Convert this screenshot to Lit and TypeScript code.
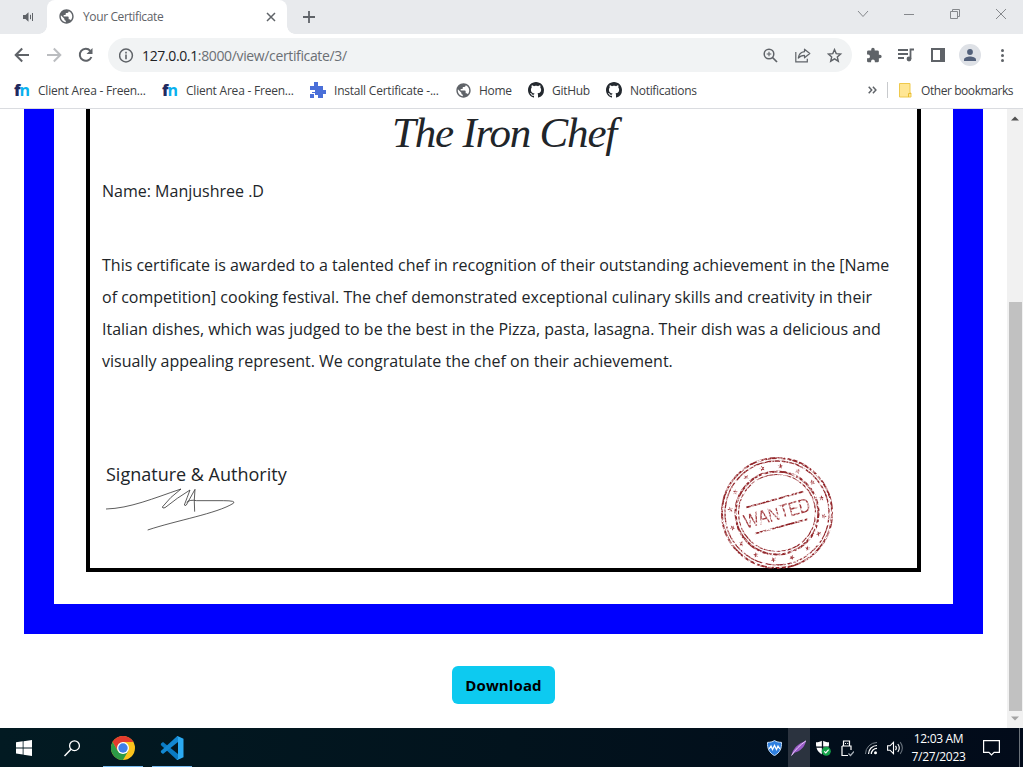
import { LitElement, html, css, svg } from "lit";
import { customElement } from "lit/decorators.js";

const icon = (w: number, h: number, body: unknown, vb = `0 0 ${w} ${h}`) =>
  html`<svg class="ic" width=${w} height=${h} viewBox=${vb}>${body}</svg>`;

const globe = icon(15, 15, svg`<path fill="#5f6368" d="M12 2C6.480 2 2 6.480 2 12s4.480 10 10 10 10-4.480 10-10S17.520 2 12 2zm-1 17.930c-3.950-.49-7-3.850-7-7.930 0-.62.080-1.210.210-1.790L9 15v1c0 1.100.9 2 2 2v1.930zm6.900-2.540c-.26-.81-1-1.390-1.900-1.390h-1v-3c0-.55-.45-1-1-1H8v-2h2c.55 0 1-.45 1-1V7h2c1.100 0 2-.9 2-2v-.41c2.930 1.190 5 4.060 5 7.410 0 2.080-.8 3.970-2.100 5.390z"/>`, "1.500 1.500 21 21");

const octocat = icon(16, 16, svg`<path fill="#24292f" d="M8 0C3.58 0 0 3.58 0 8c0 3.54 2.29 6.53 5.47 7.59.4.07.55-.17.55-.38 0-.19-.01-.82-.01-1.49-2.01.37-2.53-.49-2.69-.94-.09-.23-.48-.94-.82-1.13-.28-.15-.68-.52-.01-.53.63-.01 1.08.58 1.23.82.72 1.21 1.87.87 2.33.66.07-.52.28-.87.51-1.07-1.78-.2-3.64-.89-3.64-3.95 0-.87.31-1.59.82-2.15-.08-.2-.36-1.02.08-2.12 0 0 .67-.21 2.2.82.64-.18 1.32-.27 2-.27s1.36.09 2 .27c1.53-1.04 2.2-.82 2.2-.82.44 1.1.16 1.92.08 2.12.51.56.82 1.27.82 2.15 0 3.07-1.87 3.75-3.65 3.95.29.25.54.73.54 1.48 0 1.07-.01 1.93-.01 2.2 0 .21.15.46.55.38A8.01 8.01 0 0 0 16 8c0-4.42-3.58-8-8-8z"/>`);

const pixelPuzzle = icon(16, 16, svg`<path fill="#4a6fd8" shape-rendering="crispEdges" d="M4 0h4v4h5v4h3v4h-3v4h-5v-3h-3v-2h-3v-1h3v-2h-5v-4h4zM0 12h4v4h-4z"/>`);

const folder = icon(13, 15, svg`<path d="M.5.5h10.500v9.500h1v4h-11.500z" fill="#ffe694" stroke="#efc94c"/><path d="M9.500 14v-3.500h2.500" fill="none" stroke="#e8bd30"/>`);

const fnLogo = html`<span class="fn"><b>f</b><i>n</i></span>`;

const G = "#5f6368";

@customElement("browser-tabs")
class BrowserTabs extends LitElement {
  static styles = css`
    :host { display: flex; height: 34px; background: #e8eaed; font: 12px "Open Sans", sans-serif; }
    .ic { display: block; flex: none; }
    .muted { width: 47px; display: flex; align-items: center; padding-left: 23px; box-sizing: border-box; }
    .tab { width: 240px; height: 34px; box-sizing: border-box; background: #fff; border-radius: 8px 8px 0 0; display: flex; align-items: center; padding: 0 11px 1px 12px; }
    .flare { width: 8px; margin-left: -8px; align-self: flex-end; height: 8px; background: radial-gradient(circle at 0 0, #e8eaed 7.5px, #fff 8px); }
    .flare.r { margin: 0 -8px 0 0; background: radial-gradient(circle at 100% 0, #e8eaed 7.5px, #fff 8px); }
    .t { margin-left: 9px; flex: 1; color: #5f6368; letter-spacing: -0.38px; white-space: nowrap; }
    .plus { width: 44px; display: flex; align-items: center; justify-content: center; }
    .win { margin: 0 -1px 0 auto; display: grid; grid-template-columns: repeat(4, 46px); height: 28px; align-items: center; justify-items: center; }
  `;
  render() {
    return html`
      <div class="muted">${icon(11, 12, svg`<path d="M0 4h2.500l3-2.800v9.600l-3-2.800h-2.500z" fill=${G}/><path d="M7.500 3.800v4.400M9.500 2v8" stroke=${G} stroke-width="1"/>`)}</div>
      <div class="flare"></div>
      <div class="tab">${globe}<span class="t">Your Certificate</span>
        ${icon(10, 10, svg`<path d="M1 1l8 8M9 1l-8 8" stroke=${G} stroke-width="1.500"/>`)}</div>
      <div class="flare r"></div>
      <div class="plus">${icon(12, 12, svg`<path d="M6 0v12M0 6h12" stroke=${G} stroke-width="1.800"/>`)}</div>
      <div class="win">
        ${icon(12, 8, svg`<path d="M1 1l5 5.500 5-5.500" fill="none" stroke="#85888c"/>`)}
        ${icon(10, 10, svg`<path d="M0 5.500h10" stroke="#85888c"/>`)}
        ${icon(10, 10, svg`<path d="M.5 2.500h7v7h-7zM2.500 2.500v-2h7v7h-2" fill="none" stroke="#85888c"/>`)}
        ${icon(10, 10, svg`<path d="M0 0l10 10M10 0l-10 10" stroke="#85888c"/>`)}
      </div>`;
  }
}

@customElement("browser-toolbar")
class BrowserToolbar extends LitElement {
  static styles = css`
    :host { display: flex; height: 42px; background: #fff; align-items: center; font: 14px "Open Sans", sans-serif; }
    .ic { display: block; flex: none; }
    .nav, .inner, .ext { display: grid; grid-auto-flow: column; grid-auto-columns: 32px; justify-items: center; align-items: center; }
    .nav { padding: 0 6px; }
    .omni { width: 744px; height: 34px; border-radius: 17px; background: #f1f3f4; display: flex; align-items: center; box-sizing: border-box; padding: 0 1px 0 11px; }
    .url { flex: 1; margin-left: 8px; color: #6b6f74; white-space: nowrap; letter-spacing: -0.36px; }
    .url b { font-weight: 400; color: #202124; }
    .ext { margin-left: 6px; }
    .av { width: 22px; height: 22px; border-radius: 50%; background: #dee1e6; display: grid; place-items: center; }
  `;
  render() {
    return html`
      <div class="nav">
        ${icon(16, 16, svg`<path d="M15 8h-13M8.200 1.500l-6.500 6.500 6.500 6.500" fill="none" stroke=${G} stroke-width="2"/>`)}
        ${icon(16, 16, svg`<path d="M1 8h13M7.800 1.500l6.500 6.500-6.500 6.500" fill="none" stroke="#bbbdc0" stroke-width="2"/>`)}
        ${icon(16, 16, svg`<path d="M13.400 10A6 6 0 1 1 12.300 3.800" fill="none" stroke=${G} stroke-width="2"/><path d="M14.500 1v6h-6z" fill=${G}/>`)}
      </div>
      <div class="omni">
        ${icon(15, 15, svg`<circle cx="7" cy="7.500" r="6.400" fill="none" stroke=${G} stroke-width="1.500"/><path d="M7 6.500v4.700M7 3.800v1.600" stroke=${G} stroke-width="1.600"/>`)}
        <span class="url"><b>127.0.0.1</b>:8000/view/certificate/3/</span>
        <div class="inner">
          ${icon(16, 15, svg`<circle cx="6" cy="6" r="4.800" fill="none" stroke=${G} stroke-width="1.500"/><path d="M9.500 9.500l4.500 4.500" stroke=${G} stroke-width="1.700"/><path d="M6 3.700v4.600M3.700 6h4.600" stroke=${G} stroke-width="1.100"/>`)}
          ${icon(16, 15, svg`<path d="M.8 4v9.800h11.500v-3" fill="none" stroke=${G} stroke-width="1.200"/><path d="M9.500 1.200l5.300 4.300-5.300 4.300v-2.500c-3 0-4.700.8-6.200 2.800.5-3.500 2.500-6 6.200-6.400z" fill="none" stroke=${G} stroke-width="1.200" stroke-linejoin="round"/>`)}
          ${icon(16, 15, svg`<path d="M7.500 1.600l1.700 4 4.400.4-3.300 2.900 1 4.300-3.800-2.300-3.800 2.300 1-4.300-3.300-2.900 4.400-.4z" fill="none" stroke=${G} stroke-width="1.400"/>`)}
        </div>
      </div>
      <div class="ext">
        ${icon(16, 16, svg`<path fill=${G} d="M20.500 11H19V7a2 2 0 0 0-2-2h-4V3.500a2.500 2.500 0 0 0-5 0V5H4a2 2 0 0 0-2 2v3.800h1.500a2.700 2.700 0 0 1 0 5.400H2V20a2 2 0 0 0 2 2h3.800v-1.500a2.700 2.700 0 0 1 5.400 0V22H17a2 2 0 0 0 2-2v-4h1.500a2.500 2.500 0 0 0 0-5z"/>`, "0.500 0 23 23")}
        ${icon(16, 14, svg`<path d="M0 2h10M0 6h10M0 10h6" stroke=${G} stroke-width="1.800"/><path d="M12.500 11v-9.500h3.500" fill="none" stroke=${G} stroke-width="1.800"/><circle cx="11" cy="11" r="2.400" fill=${G}/>`)}
        ${icon(14, 14, svg`<path d="M1 1h12v12h-12z" fill="none" stroke=${G} stroke-width="2"/><path d="M9 1h4v12h-4z" fill=${G}/>`)}
        <span class="av">${icon(12, 12, svg`<circle cx="6" cy="3" r="2.900" fill="#52607a"/><path d="M0 12v-1.600c0-2 3.500-3 6-3s6 1 6 3v1.600z" fill="#52607a"/>`)}</span>
        ${icon(4, 14, svg`<g fill=${G}><circle cx="2.500" cy="2.500" r="1.500"/><circle cx="2.500" cy="7.500" r="1.500"/><circle cx="2.500" cy="12.500" r="1.500"/></g>`)}
      </div>`;
  }
}

@customElement("bookmark-bar")
class BookmarkBar extends LitElement {
  static styles = css`
    :host { display: flex; height: 33px; padding: 0 0 4px 14px; box-sizing: border-box; width: 1023px; background: #fff; border-bottom: 1px solid #dadce0; align-items: center; font: 12px "Open Sans", sans-serif; color: #3c4043; }
    .ic { display: block; flex: none; }
    .bm { display: flex; align-items: center; gap: 8px; white-space: nowrap; flex: none; }
    .w0 { width: 148px; letter-spacing: -0.22px; } .w1 { width: 146px; letter-spacing: -0.22px; }
    .w2 { width: 72px; letter-spacing: -0.3px; } .w3 { width: 78px; letter-spacing: -0.3px; } .w4 { width: 120px; letter-spacing: -0.3px; }
    .fn { width: 16px; height: 16px; font: bold 16px/16px "Open Sans", sans-serif; letter-spacing: -1.1px; display: block; }
    .fn b { color: #20295f; } .fn i { color: #0ab0ee; font-style: normal; }
    .more { margin-left: auto; width: 19px; }
    .sep { width: 1px; height: 16px; background: #c8cacd; margin-right: 11px; }
    .other { gap: 9px; width: 124px; letter-spacing: -0.43px; }
  `;
  render() {
    const items = [
      [fnLogo, "Client Area - Freen...", "w0"],
      [fnLogo, "Client Area - Freen...", "w0"],
      [pixelPuzzle, "Install Certificate -...", "w1"],
      [globe, "Home", "w2"],
      [octocat, "GitHub", "w3"],
      [octocat, "Notifications", "w4"],
    ];
    return html`${items.map(([i, t, w]) => html`<div class="bm ${w}">${i}<span>${t}</span></div>`)}
      <div class="more">${icon(9, 8, svg`<path d="M.7.7l3 3.300-3 3.300M4.900.7l3 3.300-3 3.300" fill="none" stroke=${G} stroke-width="1.500"/>`)}</div>
      <div class="sep"></div>
      <div class="bm other">${folder}<span>Other bookmarks</span></div>`;
  }
}

@customElement("wanted-stamp")
class WantedStamp extends LitElement {
  static styles = css`
    :host { display: block; width: 114px; height: 112px; }
    svg { display: block; overflow: visible; }
    .w { font: 20px "Liberation Sans Narrow", "Liberation Sans", sans-serif; }
  `;
  render() {
    const stars = Array.from({ length: 16 }, (_, i) => {
      const a = (i * 22.5 + 4) * Math.PI / 180;
      return svg`<path transform="translate(${57 + 47 * Math.cos(a)} ${56 + 47 * Math.sin(a)}) rotate(${i * 22.5 + 94})" d="M0-2.800l.8 1.900 2 .1-1.600 1.300.6 2-1.800-1.100-1.800 1.100.6-2-1.600-1.300 2-.1z"/>`;
    });
    return html`<svg width="114" height="112" viewBox="0 0 114 112">
      <filter id="worn" x="-5%" y="-5%" width="110%" height="110%" color-interpolation-filters="sRGB">
        <feTurbulence type="fractalNoise" baseFrequency="0.35" numOctaves="2" seed="7" result="n"/>
        <feColorMatrix in="n" type="matrix" values="0 0 0 0 0  0 0 0 0 0  0 0 0 0 0  0 0 0 3.200 -0.900" result="m"/>
        <feComposite in="SourceGraphic" in2="m" operator="in"/>
      </filter>
      <g filter="url(#worn)" fill="#a13a3e" stroke="none">
        <g fill="none" stroke="#94282c">
          <circle cx="57" cy="56" r="55" stroke-width="2"/>
          <circle cx="57" cy="56" r="52" stroke-width="1.300"/>
          <circle cx="57" cy="56" r="41.500" stroke-width="2.200"/>
          <circle cx="57" cy="56" r="38.500" stroke-width="1.200"/>
        </g>
        ${stars}
        <g transform="rotate(-15.500 57 56)">
          <path d="M29 42.500h59M30 70h55" stroke="#8f2226" stroke-width="1.800"/>
          <text class="w" x="23" y="63" textLength="68" lengthAdjust="spacingAndGlyphs">WANTED</text>
        </g>
      </g></svg>`;
  }
}

@customElement("certificate-page")
class CertificatePage extends LitElement {
  static styles = css`
    :host { display: flex; height: 619px; background: #fff; overflow: hidden; font: 16px/32px "Open Sans", sans-serif; color: #212529; }
    .page { width: 1007px; padding: 0 24px; box-sizing: border-box; }
    .frame { height: 525px; box-sizing: border-box; border: 30px solid #00f; border-top: 0; padding: 0 32px 32px; }
    .cert { height: 463px; box-sizing: border-box; border: 4px solid #000; border-top: 0; padding: 0 12px; }
    h1 { margin: 0; height: 66px; width: 804px; text-align: center; font: italic 400 43px/48px "Liberation Serif", serif; letter-spacing: -1.2px; white-space: nowrap; }
    p { margin: 0; white-space: nowrap; }
    .body { margin-top: 42px; }
    .foot { display: flex; justify-content: space-between; margin-top: 71px; padding: 0 71px 0 4px; }
    .sig { font-size: 18px; line-height: 26px; padding-top: 13px; }
    .sig svg { display: block; }
    wanted-stamp { margin-top: 9px; }
    .dl { display: block; margin: 32px 0 0 428px; width: 103px; height: 38px; border: 0; padding: 0; border-radius: 6px; background: #0dcaf0; color: #000; font: bold 15px/38px "Open Sans", sans-serif; letter-spacing: 0.1px; }
    .bar { width: 16px; background: #f1f1f1; display: flex; flex-direction: column; align-items: center; justify-content: space-between; }
    .bar svg { display: block; flex: none; margin: 7px 0 6px; }
    .bar .down { margin: 5px 0 7px; }
    .thumb { width: 13px; height: 409px; background: #c1c1c1; margin: auto 0 0 1px; }
  `;
  render() {
    return html`
      <div class="page">
        <div class="frame"><div class="cert">
          <h1>The Iron Chef</h1>
          <p>Name: Manjushree .D</p>
          <p class="body">This certificate is awarded to a talented chef in recognition of their outstanding achievement in the [Name<br>of competition] cooking festival. The chef demonstrated exceptional culinary skills and creativity in their<br>Italian dishes, which was judged to be the best in the Pizza, pasta, lasagna. Their dish was a delicious and<br>visually appealing represent. We congratulate the chef on their achievement.</p>
          <div class="foot">
            <div class="sig">Signature &amp; Authority
              <svg width="130" height="44" viewBox="48 110 390 132" fill="none" stroke="#333" stroke-width="2.400" stroke-linejoin="round">
                <path d="M48 176C120 174 190 144 273 116Q240 140 217 170Q217 175 225 172Q262 142 300 119Q292 140 283 164Q284 168 289 164L315 117Q311 150 314 184"/>
                <path d="M290 156Q300 147 320 151L400 151Q440 151 430 159C380 190 260 210 173 239"/>
              </svg>
            </div>
            <wanted-stamp></wanted-stamp>
          </div>
        </div></div>
        <button class="dl">Download</button>
      </div>
      <div class="bar">
        <svg width="8" height="5"><path d="M0 4.500l4-4 4 4z" fill="#505050"/></svg>
        <div class="thumb"></div>
        <svg class="down" width="8" height="5"><path d="M0 .5l4 4 4-4z" fill="#a3a3a3"/></svg>
      </div>`;
  }
}

@customElement("task-bar")
class TaskBar extends LitElement {
  static styles = css`
    :host { display: flex; height: 39px; background: linear-gradient(90deg, #021a22, #02131d 50%, #020b1a); color: #fff; font: 12px/18px "Open Sans", sans-serif; }
    .ic { display: block; flex: none; }
    .c { display: grid; place-items: center; height: 39px; flex: none; box-sizing: border-box; padding-top: 1px; }
    .a { width: 48px; } .run { width: 40px; margin: 0 9px 0 0; border-bottom: 1px solid #76b9ed; padding-top: 2px; }
    .gap { width: 7px; }
    .tray { margin-left: auto; display: flex; }
    .s { width: 24px; } .feather { width: 22px; background: #2b333f; margin: 0 1px; }
    .clock { width: 63px; margin-right: 1px; text-align: center; padding-top: 2px; letter-spacing: -0.32px; white-space: nowrap; }
    .note { width: 40px; } .edge { width: 3px; border-left: 1px solid #6b727a; margin-left: 8px; }
  `;
  render() {
    return html`
      <div class="c a">${icon(16, 16, svg`<path fill="#fff" d="M0 2.300l6.700-1v6.200h-6.700zM7.500 1.200l8.500-1.200v7.500h-8.500zM0 8.400h6.700v6.200l-6.700-1zM7.500 8.400h8.500v7.500l-8.500-1.200z"/>`)}</div>
      <div class="c a">${icon(16, 17, svg`<circle cx="10.500" cy="5.700" r="4.900" fill="none" stroke="#fff" stroke-width="1.300"/><path d="M7 9.300l-6.500 6.700" stroke="#fff" stroke-width="1.500"/>`)}</div>
      <div class="gap"></div>
      <div class="c run">${icon(24, 24, svg`
        <circle cx="12" cy="12" r="12" fill="#fbc31c"/>
        <path d="M12 6h10.400A12 12 0 0 0 1.600 6l5.200 9z" fill="#e33b2e"/>
        <path d="M1.600 6A12 12 0 0 0 12 24l5.200-9-5.200 3-5.200-3z" fill="#2c9b47"/>
        <circle cx="12" cy="12" r="6" fill="#fff"/><circle cx="12" cy="12" r="4.700" fill="#3f7fe8"/>`)}</div>
      <div class="c run">${icon(24, 24, svg`
        <path d="M1 7.500l2-1.600 15 12v6l-1.500-.5L.8 9z" fill="#0a7bc4"/>
        <path d="M1 16.500l2 1.600L18 6V0l-1.500.7L.8 15z" fill="#1388d2"/>
        <path d="M17.500 0l6 2.800v18.400l-6 2.800-1.300-.6c1.100.3 1.800-.3 1.800-1.400V2c0-1.100-.7-1.700-1.800-1.300z" fill="#2baaf2"/>`)}</div>
      <div class="tray">
        <div class="c s">${icon(16, 16, svg`<path d="M7.500.5c2 1.500 4.500 1.800 7 1.900.2 6-1.500 10.300-7 13.200-5.500-2.900-7.200-7.200-7-13.200 2.500-.1 5-.4 7-1.900z" fill="#2f80e0" stroke="#c5defa" stroke-width="1"/><path d="M2 9l2-3 1.500 3.500 2-4 2 4 1.500-3.500 2 3" fill="none" stroke="#fff" stroke-width="1.300"/>`)}</div>
        <div class="c feather">${icon(16, 16, svg`<path d="M.7 15.500C1 9.500 7 3.500 15 .8 14 7 9 11.500 3.500 12.700z" fill="#9a5cc8"/><path d="M.5 15.500C4 10 9 5 15 .8" stroke="#e7c9f7" fill="none"/>`)}</div>
        <div class="c s">${icon(16, 16, svg`<path d="M7.500.5c2 1.200 4 1.700 6.500 1.800.2 5.500-1 9.500-6.500 12.500-5.500-3-6.700-7-6.500-12.500 2.500-.1 4.500-.6 6.500-1.800z" fill="#fff"/><path d="M7.500 0v15M1 7.200h13" stroke="#06101c" stroke-width="1.300"/><circle cx="11.300" cy="11.200" r="4.500" fill="#16a34a"/><path d="M9.200 11.300l1.600 1.600 2.800-3.200" fill="none" stroke="#fff" stroke-width="1.200"/>`)}</div>
        <div class="c s">${icon(14, 17, svg`<path d="M3.500 6v-5h6v5M2 6h9v4M2 6v9.500h6" fill="none" stroke="#fff" stroke-width="1.200"/><path d="M5 3.500h1M7.200 3.500h1" stroke="#fff"/><path d="M8.500 13.500l2 2 3.500-4" fill="none" stroke="#a9b0b8" stroke-width="1.200"/>`)}</div>
        <div class="c s">${icon(14, 14, svg`<g fill="none"><path d="M1.500 13A11.500 11.500 0 0 1 13 1.500" stroke="#78818a"/><path d="M4.500 13A8.500 8.500 0 0 1 13 4.500M7.300 13A5.700 5.700 0 0 1 13 7.300" stroke="#fff" stroke-width="1.200"/></g><circle cx="11.500" cy="11.700" r="1.500" fill="#fff"/>`)}</div>
        <div class="c s">${icon(17, 14, svg`<g fill="none" stroke="#fff" stroke-width="1.100"><path d="M.6 4.800h2.400l3.500-3.500v11.400l-3.500-3.500h-2.400z"/><path d="M8.500 4.800q1.700 2.200 0 4.400M10.800 3q3 4 0 8"/><path d="M13.200 1.200q4.300 5.800 0 11.600" stroke="#68717b"/></g>`)}</div>
        <div class="clock">12:03 AM<br>7/27/2023</div>
        <div class="c note">${icon(17, 16, svg`<path d="M.6.6h15.800v11.800h-5.300l-2.600 2.600-2.600-2.600h-5.300z" fill="none" stroke="#fff" stroke-width="1.200"/>`)}</div>
        <div class="edge"></div>
      </div>`;
  }
}

@customElement("app-root")
class AppRoot extends LitElement {
  static styles = css`
    :host { display: flex; flex-direction: column; width: 1023px; height: 767px; overflow: hidden; background: #fff; }
  `;
  render() {
    return html`<browser-tabs></browser-tabs><browser-toolbar></browser-toolbar><bookmark-bar></bookmark-bar><certificate-page></certificate-page><task-bar></task-bar>`;
  }
}
